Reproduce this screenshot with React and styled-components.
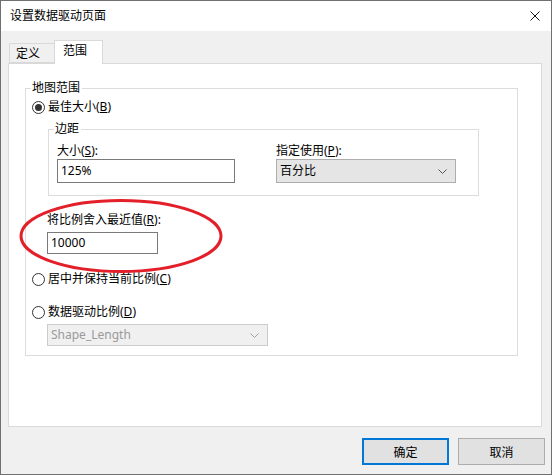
import React from 'react';
import styled, { createGlobalStyle } from 'styled-components';

const Global = createGlobalStyle`
  html, body {
    margin: 0;
    padding: 0;
    background: #ffffff;
  }
  body {
    font-family: "Noto Sans", "Noto Sans CJK SC", sans-serif;
    font-size: 12px;
    color: #000;
  }
  * { box-sizing: border-box; }
`;

const Window = styled.div`
  width: 552px;
  height: 475px;
  border: 1px solid #707070;
  background: #f0f0f0;
  display: flex;
  flex-direction: column;
`;

const TitleBar = styled.div`
  height: 30px;
  background: #fff;
  display: flex;
  align-items: center;
  justify-content: space-between;
  padding: 0 11px 0 9px;
  font-size: 12px;
  line-height: 16px;
`;

const CloseIcon = () => (
  <svg width="10" height="10" viewBox="0 0 10 10">
    <path d="M0.5 0.5 L9.5 9.5 M9.5 0.5 L0.5 9.5" stroke="#111" strokeWidth="1" fill="none" />
  </svg>
);

const Body = styled.div`
  flex: 1;
  display: flex;
  flex-direction: column;
  padding: 9px 9px 0 7px;
`;

const TabStrip = styled.div`
  display: flex;
  align-items: flex-end;
  height: 23px;
  padding-left: 1px;
  position: relative;
  z-index: 1;
`;

const Tab = styled.div`
  height: ${p => (p.$active ? '24px' : '20px')};
  margin-bottom: ${p => (p.$active ? '-1px' : '0')};
  padding: ${p => (p.$active ? '2px 15px 0 8px' : '2px 14px 0 6px')};
  margin-left: ${p => (p.$active ? '-1px' : '0')};
  background: ${p => (p.$active ? '#fff' : '#f0f0f0')};
  border: 1px solid #d9d9d9;
  border-bottom: ${p => (p.$active ? 'none' : '1px solid #d9d9d9')};
  line-height: 16px;
`;

const Panel = styled.div`
  position: relative;
  height: 364px;
  background: #fff;
  border: 1px solid #d9d9d9;
`;

const Group = styled.fieldset`
  margin: ${p => p.$margin};
  padding: 0 0 ${p => p.$padBottom}px 0;
  border: 1px solid #dcdcdc;
  min-width: 0;
`;

const Legend = styled.legend`
  margin-left: 5px;
  padding: 0 2px 0 1px;
  line-height: 16px;
  font-size: 12px;
`;

const Key = styled.span`
  text-decoration: underline;
`;

const RadioRow = styled.label`
  display: flex;
  align-items: center;
  gap: 2px;
  height: 18px;
  margin-top: ${p => p.$top}px;
  padding-left: 6px;
  line-height: 16px;
`;

const RadioCircle = styled.span`
  width: 13px;
  height: 13px;
  border-radius: 50%;
  border: 1px solid #333;
  display: flex;
  align-items: center;
  justify-content: center;
  margin-right: 1px;

  &::after {
    content: '';
    width: 7px;
    height: 7px;
    border-radius: 50%;
    background: ${p => (p.$checked ? '#333' : 'transparent')};
  }
`;

const FieldRow = styled.div`
  display: flex;
  gap: 41px;
  padding: 6px 0 0 8px;
`;

const Field = styled.div`
  display: flex;
  flex-direction: column;
  gap: ${p => p.$gap ?? 0}px;
  margin: ${p => p.$margin || '0'};
`;

const Label = styled.div`
  line-height: 16px;
  height: 16px;
`;

const TextBox = styled.div`
  width: ${p => p.$w}px;
  height: ${p => p.$h}px;
  border: 1px solid #7a7a7a;
  background: #fff;
  display: flex;
  align-items: center;
  padding-left: 3px;
  line-height: 16px;
`;

const Select = styled.div`
  width: ${p => p.$w}px;
  height: ${p => p.$h}px;
  border: 1px solid ${p => (p.$disabled ? '#cccccc' : '#adadad')};
  background: ${p => (p.$disabled ? '#f0f0f0' : '#e5e5e5')};
  color: ${p => (p.$disabled ? '#9a9a9a' : '#000')};
  display: flex;
  align-items: center;
  justify-content: space-between;
  padding: 0 8px 0 3px;
  line-height: 16px;
  margin: ${p => p.$margin || '0'};
`;

const Chevron = ({ color }) => (
  <svg width="9" height="5" viewBox="0 0 9 5">
    <path d="M0.5 0.5 L4.5 4.5 L8.5 0.5" stroke={color} strokeWidth="1" fill="none" />
  </svg>
);

const Highlight = styled.svg`
  position: absolute;
  left: 9px;
  top: 134px;
  pointer-events: none;
`;

const Footer = styled.div`
  display: flex;
  justify-content: flex-end;
  gap: 9px;
  margin: 11px -3px 0 0;
`;

const Button = styled.button`
  width: 87px;
  height: 27px;
  font: inherit;
  font-size: 12px;
  color: #000;
  background: #e1e1e1;
  border: ${p => (p.$default ? '2px solid #0078d7' : '1px solid #adadad')};
  padding: 0;
`;

export default function App() {
  return (
    <>
      <Global />
      <Window>
        <TitleBar>
          <span>设置数据驱动页面</span>
          <CloseIcon />
        </TitleBar>
        <Body>
          <TabStrip>
            <Tab>定义</Tab>
            <Tab $active>范围</Tab>
          </TabStrip>
          <Panel>
            <Group $margin="16px 23px 0 16px" $padBottom={9}>
              <Legend>地图范围</Legend>
              <RadioRow $top={2}>
                <RadioCircle $checked />
                <span>最佳大小(<Key>B</Key>)</span>
              </RadioRow>
              <Group $margin="5px 38px 0 22px" $padBottom={12}>
                <Legend>边距</Legend>
                <FieldRow>
                  <Field>
                    <Label>大小(<Key>S</Key>):</Label>
                    <TextBox $w={178} $h={24}>125%</TextBox>
                  </Field>
                  <Field>
                    <Label>指定使用(<Key>P</Key>):</Label>
                    <Select $w={180} $h={24}>
                      <span>百分比</span>
                      <Chevron color="#555" />
                    </Select>
                  </Field>
                </FieldRow>
              </Group>
              <Field $margin="16px 0 0 21px" $gap={4}>
                <Label>将比例舍入最近值(<Key>R</Key>):</Label>
                <TextBox $w={111} $h={22}>10000</TextBox>
              </Field>
              <RadioRow $top={16}>
                <RadioCircle />
                <span>居中并保持当前比例(<Key>C</Key>)</span>
              </RadioRow>
              <RadioRow $top={15}>
                <RadioCircle />
                <span>数据驱动比例(<Key>D</Key>)</span>
              </RadioRow>
              <Select $w={221} $h={22} $disabled $margin="3px 0 0 21px">
                <span>Shape_Length</span>
                <Chevron color="#a0a0a0" />
              </Select>
            </Group>
            <Highlight width="206" height="78" viewBox="0 0 206 78">
              <ellipse cx="103" cy="38" rx="100" ry="35.5" fill="none" stroke="#e3202a" strokeWidth="3" />
            </Highlight>
          </Panel>
          <Footer>
            <Button $default>确定</Button>
            <Button>取消</Button>
          </Footer>
        </Body>
      </Window>
    </>
  );
}
